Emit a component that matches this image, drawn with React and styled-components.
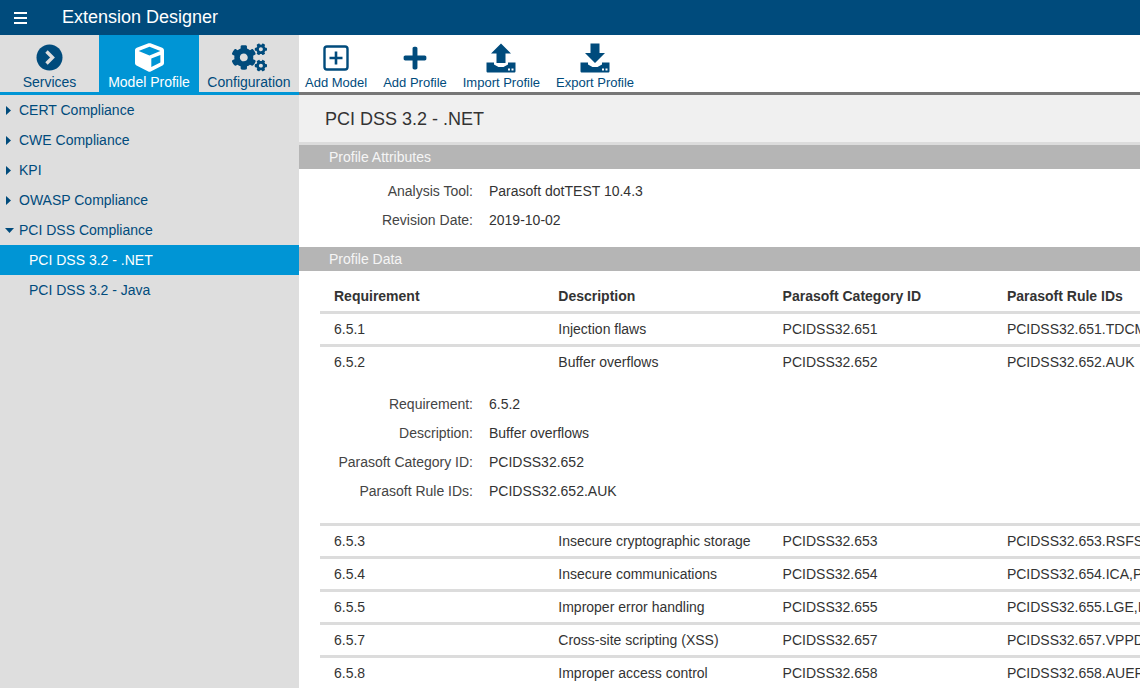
import React from "react";
import styled, { createGlobalStyle } from "styled-components";
import { FaCube, FaCogs, FaPlus } from "react-icons/fa";

const navy = "#004b7c";
const blue = "#0095d5";

const tabs = [
  { label: "Services", width: 99, icon: <ServicesIcon /> },
  { label: "Model Profile", width: 100, icon: <FaCube size={29} />, active: true },
  { label: "Configuration", width: 100, icon: <FaCogs size={35} /> },
];

const tools = [
  { label: "Add Model", icon: <AddBoxIcon /> },
  { label: "Add Profile", icon: <FaPlus size={26} /> },
  { label: "Import Profile", icon: <TrayIcon up /> },
  { label: "Export Profile", icon: <TrayIcon /> },
];

const tree = [
  { label: "CERT Compliance" },
  { label: "CWE Compliance" },
  { label: "KPI" },
  { label: "OWASP Compliance" },
  { label: "PCI DSS Compliance", open: true },
];

const rowsBottom = [
  ["6.5.3", "Insecure cryptographic storage", "PCIDSS32.653", "PCIDSS32.653.RSFS"],
  ["6.5.4", "Insecure communications", "PCIDSS32.654", "PCIDSS32.654.ICA,PT"],
  ["6.5.5", "Improper error handling", "PCIDSS32.655", "PCIDSS32.655.LGE,I"],
  ["6.5.7", "Cross-site scripting (XSS)", "PCIDSS32.657", "PCIDSS32.657.VPPD"],
  ["6.5.8", "Improper access control", "PCIDSS32.658", "PCIDSS32.658.AUER"],
];

function MenuIcon() {
  return (
    <svg width="13" height="12" viewBox="0 0 13 12">
      <path d="M0 1h13M0 6h13M0 11h13" stroke="currentColor" strokeWidth="1.8" />
    </svg>
  );
}

function ServicesIcon() {
  return (
    <svg width="27" height="27" viewBox="0 0 27 27">
      <circle cx="13.5" cy="13.5" r="13" fill="currentColor" />
      <path d="M10.5 7.5l6 6-6 6" fill="none" stroke="#dedede" strokeWidth="3.4" />
    </svg>
  );
}

function AddBoxIcon() {
  return (
    <svg width="26" height="26" viewBox="0 0 26 26">
      <rect x="1.5" y="1.5" width="23" height="23" rx="2.5" fill="none" stroke="currentColor" strokeWidth="2.4" />
      <path d="M13 6.5v13M6.5 13h13" stroke="currentColor" strokeWidth="2.6" />
    </svg>
  );
}

function TrayIcon({ up }) {
  return (
    <svg width="30" height="30" viewBox="0 0 30 30">
      <path
        d={
          up
            ? "M15 0.5L25 10.5H19.5V20H10.5V10.5H5Z"
            : "M10.5 0.5H19.5V10H25L15 20L5 10H10.5Z"
        }
        fill="currentColor"
      />
      <path
        d="M0.5 19.5H8V21.5L12.5 24H17.5L22 21.5V19.5H29.5V28C29.5 29 29 29.5 28 29.5H2C1 29.5 0.5 29 0.5 28Z"
        fill="currentColor"
      />
      <rect x="22" y="25.5" width="2" height="2" fill="#fff" />
      <rect x="25.5" y="25.5" width="2" height="2" fill="#fff" />
    </svg>
  );
}

function CaretIcon({ open }) {
  return open ? (
    <svg width="9" height="5" viewBox="0 0 9 5">
      <path d="M0 0H9L4.5 5Z" fill="currentColor" />
    </svg>
  ) : (
    <svg width="5" height="9" viewBox="0 0 5 9">
      <path d="M0 0L5 4.5L0 9Z" fill="currentColor" />
    </svg>
  );
}

function Row({ cells, open }) {
  return (
    <TableRow $open={open}>
      {cells.map((text) => (
        <Cell key={text}>{text}</Cell>
      ))}
    </TableRow>
  );
}

function App() {
  return (
    <>
      <GlobalStyle />
      <Page>
        <Header>
          <MenuButton>
            <MenuIcon />
          </MenuButton>
          <AppTitle>Extension Designer</AppTitle>
        </Header>
        <Body>
          <Sidebar>
            <Tabs>
              {tabs.map((tab) => (
                <Tab key={tab.label} $active={tab.active} $width={tab.width}>
                  <TabIcon>{tab.icon}</TabIcon>
                  <span>{tab.label}</span>
                </Tab>
              ))}
            </Tabs>
            <Tree>
              {tree.map((item) => (
                <TreeItem key={item.label}>
                  <Caret $open={item.open}>
                    <CaretIcon open={item.open} />
                  </Caret>
                  {item.label}
                </TreeItem>
              ))}
              <TreeChild $active>PCI DSS 3.2 - .NET</TreeChild>
              <TreeChild>PCI DSS 3.2 - Java</TreeChild>
            </Tree>
          </Sidebar>
          <Main>
            <Toolbar>
              {tools.map((tool) => (
                <Tool key={tool.label}>
                  <ToolIcon>{tool.icon}</ToolIcon>
                  <span>{tool.label}</span>
                </Tool>
              ))}
            </Toolbar>
            <TitleBar>PCI DSS 3.2 - .NET</TitleBar>
            <SectionBar>Profile Attributes</SectionBar>
            <Attributes>
              <AttrRow>
                <AttrLabel>Analysis Tool:</AttrLabel>
                <span>Parasoft dotTEST 10.4.3</span>
              </AttrRow>
              <AttrRow>
                <AttrLabel>Revision Date:</AttrLabel>
                <span>2019-10-02</span>
              </AttrRow>
            </Attributes>
            <SectionBar>Profile Data</SectionBar>
            <Table>
              <HeadRow>
                <Cell>Requirement</Cell>
                <Cell>Description</Cell>
                <Cell>Parasoft Category ID</Cell>
                <Cell>Parasoft Rule IDs</Cell>
              </HeadRow>
              <Row cells={["6.5.1", "Injection flaws", "PCIDSS32.651", "PCIDSS32.651.TDCM"]} />
              <Row open cells={["6.5.2", "Buffer overflows", "PCIDSS32.652", "PCIDSS32.652.AUK"]} />
              <Details>
                <DetailRow>
                  <AttrLabel>Requirement:</AttrLabel>
                  <span>6.5.2</span>
                </DetailRow>
                <DetailRow>
                  <AttrLabel>Description:</AttrLabel>
                  <span>Buffer overflows</span>
                </DetailRow>
                <DetailRow>
                  <AttrLabel>Parasoft Category ID:</AttrLabel>
                  <span>PCIDSS32.652</span>
                </DetailRow>
                <DetailRow>
                  <AttrLabel>Parasoft Rule IDs:</AttrLabel>
                  <span>PCIDSS32.652.AUK</span>
                </DetailRow>
              </Details>
              {rowsBottom.map((cells) => (
                <Row key={cells[0]} cells={cells} />
              ))}
            </Table>
          </Main>
        </Body>
      </Page>
    </>
  );
}

const GlobalStyle = createGlobalStyle`
  html, body {
    margin: 0;
    padding: 0;
    height: 100%;
    overflow: hidden;
  }

  body {
    font-family: "Liberation Sans", Arial, sans-serif;
    font-size: 14px;
  }
`;

const Page = styled.div`
  width: 1140px;
  height: 688px;
  display: flex;
  flex-direction: column;
  overflow: hidden;
  background: #fff;
`;

const Header = styled.div`
  height: 35px;
  flex: none;
  display: flex;
  align-items: center;
  background: ${navy};
  color: #fff;
`;

const MenuButton = styled.div`
  width: 62px;
  padding-left: 14px;
  box-sizing: border-box;
  display: flex;
  align-items: center;
`;

const AppTitle = styled.div`
  font-size: 18px;
`;

const Body = styled.div`
  flex: 1;
  display: flex;
  min-height: 0;
`;

const Sidebar = styled.div`
  width: 299px;
  flex: none;
  background: #dedede;
  display: flex;
  flex-direction: column;
`;

const Tabs = styled.div`
  height: 60px;
  flex: none;
  box-sizing: border-box;
  display: flex;
  border-bottom: 3px solid ${blue};
`;

const Tab = styled.div`
  width: ${(p) => p.$width}px;
  display: flex;
  flex-direction: column;
  align-items: center;
  color: ${(p) => (p.$active ? "#fff" : navy)};
  background: ${(p) => (p.$active ? blue : "transparent")};
  white-space: nowrap;
  line-height: 16px;
`;

const TabIcon = styled.div`
  height: 39px;
  display: flex;
  align-items: center;
  justify-content: center;
  padding-top: 6px;
  box-sizing: border-box;
`;

const ToolIcon = styled(TabIcon)`
  height: 40px;
`;

const Tree = styled.div`
  display: flex;
  flex-direction: column;
`;

const TreeItem = styled.div`
  height: 30px;
  display: flex;
  align-items: center;
  color: ${navy};
`;

const Caret = styled.span`
  width: 19px;
  padding-left: ${(p) => (p.$open ? 5 : 6)}px;
  box-sizing: border-box;
  display: flex;
  align-items: center;
`;

const TreeChild = styled.div`
  height: 30px;
  padding-left: 29px;
  display: flex;
  align-items: center;
  color: ${(p) => (p.$active ? "#fff" : navy)};
  background: ${(p) => (p.$active ? blue : "transparent")};
`;

const Main = styled.div`
  flex: 1;
  min-width: 0;
  display: flex;
  flex-direction: column;
  color: #333;
`;

const Toolbar = styled.div`
  height: 60px;
  flex: none;
  box-sizing: border-box;
  display: flex;
  gap: 16px;
  padding-left: 6px;
  border-bottom: 3px solid #777;
  color: ${navy};
`;

const Tool = styled.div`
  display: flex;
  flex-direction: column;
  align-items: center;
  white-space: nowrap;
  line-height: 16px;
  font-size: 13px;
`;

const TitleBar = styled.div`
  height: 50px;
  flex: none;
  box-sizing: border-box;
  padding: 1px 0 0 26px;
  display: flex;
  align-items: center;
  background: #f0f0f0;
  border-bottom: 3px solid #dcdcdc;
  font-size: 18px;
`;

const SectionBar = styled.div`
  height: 24px;
  flex: none;
  padding-left: 30px;
  display: flex;
  align-items: center;
  background: #b5b5b5;
  color: #f5f5f5;
`;

const Attributes = styled.div`
  height: 78px;
  flex: none;
  padding-top: 7px;
  box-sizing: border-box;
`;

const AttrRow = styled.div`
  height: 29px;
  display: flex;
  align-items: center;
  gap: 16px;
`;

const AttrLabel = styled.span`
  width: 174px;
  text-align: right;
  color: #444;
`;

const Table = styled.div`
  margin-left: 21px;
  padding-top: 8px;
`;

const TableRow = styled.div`
  height: 33px;
  box-sizing: border-box;
  display: grid;
  grid-template-columns: repeat(4, 224.3px);
  align-items: center;
  padding-left: 14px;
  border-bottom: 3px solid ${(p) => (p.$open ? "transparent" : "#dcdcdc")};
  white-space: nowrap;
`;

const HeadRow = styled(TableRow)`
  height: 35px;
  padding-top: 2px;
  font-weight: bold;
`;

const Cell = styled.div`
  overflow: visible;
`;

const Details = styled.div`
  height: 149px;
  margin-top: -3px;
  padding-top: 12px;
  box-sizing: border-box;
  border-bottom: 3px solid #dcdcdc;
`;

const DetailRow = styled(AttrRow)`
  margin-left: -21px;
`;

export default App;
